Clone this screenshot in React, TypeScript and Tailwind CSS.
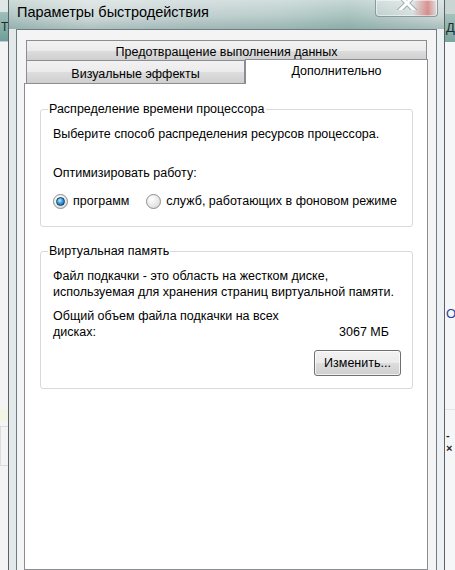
import type { ReactNode } from "react";

function Radio({ checked = false }: { checked?: boolean }) {
  return (
    <span className="flex h-[15px] w-[15px] shrink-0 items-center justify-center rounded-full border border-[#8d8d8d] bg-[radial-gradient(circle_at_35%_30%,#ffffff,#e6e6e6_60%,#cfcfcf)]">
      {checked && (
        <span className="h-[9px] w-[9px] rounded-full border border-[#0e3d66] bg-[radial-gradient(circle_at_40%_35%,#b6ecff,#3d9be0_45%,#0c4f8f)]" />
      )}
    </span>
  );
}

function Group({ title, children }: { title: string; children: ReactNode }) {
  return (
    <fieldset className="min-w-0 rounded-[3px] border border-[#d6dadd] px-[12px]">
      <legend className="-ml-[5px] px-[1px] leading-[16px]">{title}</legend>
      {children}
    </fieldset>
  );
}

function CloseButton() {
  return (
    <div className="mr-[6px] flex h-[17px] w-[63px] items-start justify-center overflow-hidden rounded-b-[4px] border border-t-0 border-[#8c9a9c] bg-[linear-gradient(90deg,rgba(255,255,255,0.15),rgba(255,255,255,0.3)_60%,rgba(220,80,80,0.55)_85%,rgba(255,255,255,0.2))] shadow-[inset_0_0_0_1px_rgba(255,255,255,0.5)]">
      <svg width="22" height="14" viewBox="0 0 22 14" className="-mt-[4px]" aria-hidden>
        <path d="M4 0 L18 14 M18 0 L4 14" stroke="#6a7a7c" strokeWidth="5" strokeLinecap="square" opacity="0.5" />
        <path d="M4 0 L18 14 M18 0 L4 14" stroke="#ffffff" strokeWidth="3" strokeLinecap="square" />
      </svg>
    </div>
  );
}

function Window() {
  return (
    <div className="flex w-[437px] shrink-0 flex-col border-x border-[#5b6266]">
      {/* title bar */}
      <div className="flex h-[29px] shrink-0 justify-between bg-[linear-gradient(180deg,rgba(255,255,255,0.35),rgba(255,255,255,0)_55%,rgba(60,110,105,0.25)),linear-gradient(90deg,#b2c7c4,#d2dcdb_18%,#c3d1d1_40%,#b9cdca_62%,#a7c2bd_78%,#cdd8d8)] pl-[8px]">
        <span className="whitespace-nowrap pt-[2px] text-[14.5px] leading-[20px] text-black">
          Параметры быстродействия
        </span>
        <CloseButton />
      </div>
      {/* frame + client */}
      <div className="flex flex-1 flex-col bg-[linear-gradient(90deg,#e3e8eb,#eef1f3)] px-[7px]">
        <div className="flex flex-1 flex-col border-x border-t border-[#6f7c84] bg-[#f4f4f4] pl-[7px] pr-[8px] pt-[10px]">
          {/* tabs */}
          <div className="ml-[2px] mr-[1px] flex h-[21px] shrink-0 items-center justify-center whitespace-nowrap border border-[#8a8d94] bg-[linear-gradient(#f2f2f2,#ebebeb_50%,#dddddd_50%,#cfcfcf)] pt-[3px] text-[12.5px] leading-[16px]">
            Предотвращение выполнения данных
          </div>
          <div className="flex h-[22px] shrink-0 whitespace-nowrap text-[12.5px] leading-[16px]">
            <div className="ml-[2px] flex w-[219px] items-center justify-center border-x border-[#8a8d94] bg-[linear-gradient(#f2f2f2,#ebebeb_50%,#dddddd_50%,#cfcfcf)] pt-[3px]">
              Визуальные эффекты
            </div>
            <div className="relative z-10 -mb-[1px] -mt-[2px] flex flex-1 items-start justify-center border-x border-t border-[#8a8d94] bg-white pt-[3px]">
              Дополнительно
            </div>
          </div>
          {/* tab page */}
          <div className="flex flex-1 flex-col gap-[16px] whitespace-nowrap border border-[#8a8d94] bg-white pl-[15px] pr-[14px] pt-[17px] text-[12.5px] leading-[16px]">
            <Group title="Распределение времени процессора">
              <p className="mt-[9px]">Выберите способ распределения ресурсов процессора.</p>
              <p className="mt-[23px]">Оптимизировать работу:</p>
              <div className="mb-[17px] mt-[12px] flex items-center">
                <Radio checked />
                <span className="ml-[5px]">программ</span>
                <span className="ml-[17px]">
                  <Radio />
                </span>
                <span className="ml-[5px]">служб, работающих в фоновом режиме</span>
              </div>
            </Group>
            <Group title="Виртуальная память">
              <p className="mt-[9px]">
                Файл подкачки - это область на жестком диске,
                <br />
                используемая для хранения страниц виртуальной памяти.
              </p>
              <div className="mt-[8px] flex items-end justify-between">
                <p>
                  Общий объем файла подкачки на всех
                  <br />
                  дисках:
                </p>
                <span className="mr-[11px]">3067 МБ</span>
              </div>
              <div className="mb-[12px] mt-[10px] flex justify-end">
                <button className="mr-[-1px] h-[26px] w-[87px] rounded-[3px] border border-[#707070] bg-[linear-gradient(#f2f2f2,#ebebeb_50%,#dddddd_50%,#cfcfcf)] text-[12.5px] shadow-[inset_0_0_0_1px_rgba(255,255,255,0.7)]">
                  Изменить...
                </button>
              </div>
            </Group>
          </div>
        </div>
      </div>
    </div>
  );
}

function BackdropLeft() {
  return (
    <div className="flex w-[8px] shrink-0 flex-col bg-[#f4f4f5]">
      <div className="h-[12px] bg-[#dfe6e6]" />
      <div className="flex h-[30px] items-center overflow-hidden border-b border-[#c9c6dc] bg-[linear-gradient(#9fbfbb,#6f9e98)] pl-[1px] text-[12px] text-[#1b2a2a]">
        Т
      </div>
      <div className="mt-[367px] h-[12px] bg-[#f3f5e4]" />
      <div className="mt-[5px] h-[40px] border-y border-l border-[#d9dce0]" />
    </div>
  );
}

function BackdropRight() {
  return (
    <div className="flex w-[10px] shrink-0 flex-col overflow-hidden bg-[#f5f6f7] text-[13px]">
      <div className="h-[14px] bg-[#c9d5d3]" />
      <div className="flex h-[28px] items-center bg-[linear-gradient(#a4c2bd,#7aa59f)] pl-[1px] text-[#1b2a2a]">
        Д
      </div>
      <div className="mt-[262px] whitespace-nowrap pl-[1px] text-[#2b3fa0]">От</div>
      <div className="mt-[85px] border-t border-[#e2e4e8]" />
      <div className="mt-[20px] pl-[1px] text-[11px] font-bold leading-[11px] text-[#222]">-</div>
      <div className="mt-[2px] pl-[1px] text-[11px] font-bold leading-[11px] text-[#222]">×</div>
    </div>
  );
}

export default function App() {
  return (
    <div className="flex h-[570px] w-[455px] overflow-hidden bg-[#f4f4f5] font-['Liberation_Sans',Arial,sans-serif] text-black">
      <BackdropLeft />
      <Window />
      <BackdropRight />
    </div>
  );
}
